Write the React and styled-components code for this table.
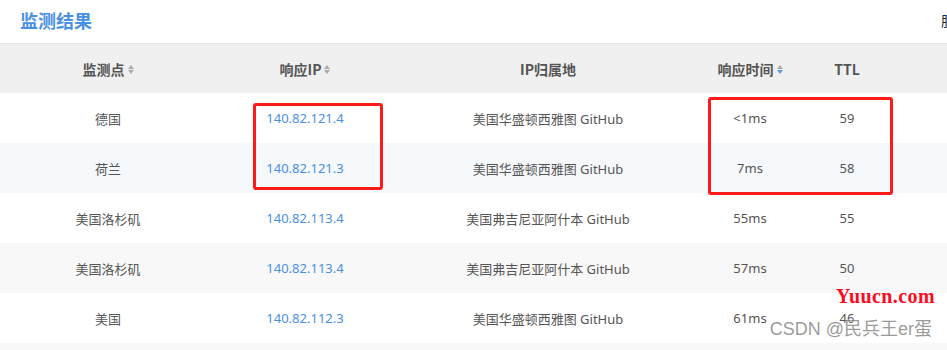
import React from "react";
import styled, { createGlobalStyle } from "styled-components";

const GlobalStyle = createGlobalStyle`
  body {
    margin: 0;
    background: #fff;
    font-family: "Noto Sans", "Noto Sans CJK SC", sans-serif;
  }
`;

const Page = styled.div`
  position: relative;
  width: 947px;
  height: 350px;
  overflow: hidden;
  background: #fff;
`;

// Top bar
const TopBar = styled.div`
  display: flex;
  align-items: center;
  height: 40px;
  padding-bottom: 3px;
  border-bottom: 1px solid #e3e3e3;
  overflow: hidden;
`;

const Title = styled.h2`
  flex: 0 0 941px;
  margin: 0;
  padding-left: 20px;
  box-sizing: border-box;
  font-size: 18px;
  font-weight: 700;
  color: #4a90e2;
  font-family: "Noto Sans CJK SC", sans-serif;
  line-height: 1;
`;

const Extra = styled.span`
  flex-shrink: 0;
  white-space: nowrap;
  font-size: 14px;
  color: #222;
  font-family: "Noto Sans CJK SC", sans-serif;
`;

// Table
const Grid = styled.div`
  display: grid;
  grid-template-columns: 216px 178px 308px 96px 98px 1fr;
`;

const HeadRow = styled.div`
  display: contents;
`;

const HeadCell = styled.div`
  display: flex;
  align-items: center;
  justify-content: center;
  gap: 3px;
  height: 49px;
  background: #f0f0f0;
  font-size: 14px;
  font-weight: 700;
  color: #555;
  font-family: "Noto Sans CJK SC", sans-serif;
`;

const Cell = styled.div`
  display: flex;
  align-items: center;
  justify-content: center;
  height: 50px;
  background: ${(p) => p.$bg};
  font-size: 13px;
  color: ${(p) => (p.$link ? "#4a8fe2" : "#555")};
`;

const Arrows = styled.span`
  display: inline-flex;
  flex-direction: column;
  gap: 1px;
  margin-top: 1px;
`;

const Tri = styled.span`
  width: 0;
  height: 0;
  border-left: 3px solid transparent;
  border-right: 3px solid transparent;
  ${(p) =>
    p.$up
      ? `border-bottom: 4px solid ${p.$color};`
      : `border-top: 4px solid ${p.$color};`}
`;

// Overlays (annotations drawn over the screenshot)
const Mark = styled.div`
  position: absolute;
  border: 3px solid #ff1a1a;
  border-radius: 3px;
  box-sizing: border-box;
`;

const Watermarks = styled.div`
  position: absolute;
  right: 12px;
  bottom: 9px;
  display: flex;
  flex-direction: column;
  align-items: flex-end;
  gap: 13px;
  pointer-events: none;
`;

const SiteMark = styled.div`
  font-family: "Liberation Serif", serif;
  font-size: 20px;
  font-weight: 700;
  color: #ff0a1e;
  letter-spacing: 0.4px;
  line-height: 1;
`;

const AuthorMark = styled.div`
  margin-right: 3px;
  font-family: "Liberation Sans", "Noto Sans CJK SC", sans-serif;
  font-size: 18px;
  line-height: 1.2;
  color: rgba(110, 110, 110, 0.7);
  text-shadow: 0 0 2px #fff;
  white-space: nowrap;
`;

function SortIcon({ active }) {
  return (
    <Arrows>
      <Tri $up $color="#aaa" />
      <Tri $color={active ? "#5b9be6" : "#aaa"} />
    </Arrows>
  );
}

const headers = [
  { label: "监测点", sort: true },
  { label: "响应IP", sort: true },
  { label: "IP归属地" },
  { label: "响应时间", sort: true, active: true },
  { label: "TTL" },
  { label: "" },
];

const rows = [
  ["德国", "140.82.121.4", "美国华盛顿西雅图 GitHub", "<1ms", "59"],
  ["荷兰", "140.82.121.3", "美国华盛顿西雅图 GitHub", "7ms", "58"],
  ["美国洛杉矶", "140.82.113.4", "美国弗吉尼亚阿什本 GitHub", "55ms", "55"],
  ["美国洛杉矶", "140.82.113.4", "美国弗吉尼亚阿什本 GitHub", "57ms", "50"],
  ["美国", "140.82.112.3", "美国华盛顿西雅图 GitHub", "61ms", "46"],
  ["", "", "", "", ""],
];

const rowBg = ["#fff", "#f5f9fc", "#fff", "#f8f8f8", "#fff", "#f8f8f8"];

export default function App() {
  return (
    <Page>
      <GlobalStyle />
      <TopBar>
        <Title>监测结果</Title>
        <Extra>服务器</Extra>
      </TopBar>
      <Grid>
        <HeadRow>
          {headers.map((h, i) => (
            <HeadCell key={i}>
              {h.label}
              {h.sort && <SortIcon active={h.active} />}
            </HeadCell>
          ))}
        </HeadRow>
        {rows.map((r, ri) => (
          <React.Fragment key={ri}>
            {r.map((v, ci) => (
              <Cell key={ci} $bg={rowBg[ri]} $link={ci === 1}>
                {v}
              </Cell>
            ))}
            <Cell $bg={rowBg[ri]} />
          </React.Fragment>
        ))}
      </Grid>
      <Mark style={{ left: 253, top: 103, width: 130, height: 87 }} />
      <Mark style={{ left: 708, top: 97, width: 185, height: 98 }} />
      <Watermarks>
        <SiteMark>Yuucn.com</SiteMark>
        <AuthorMark>CSDN @民兵王er蛋</AuthorMark>
      </Watermarks>
    </Page>
  );
}
